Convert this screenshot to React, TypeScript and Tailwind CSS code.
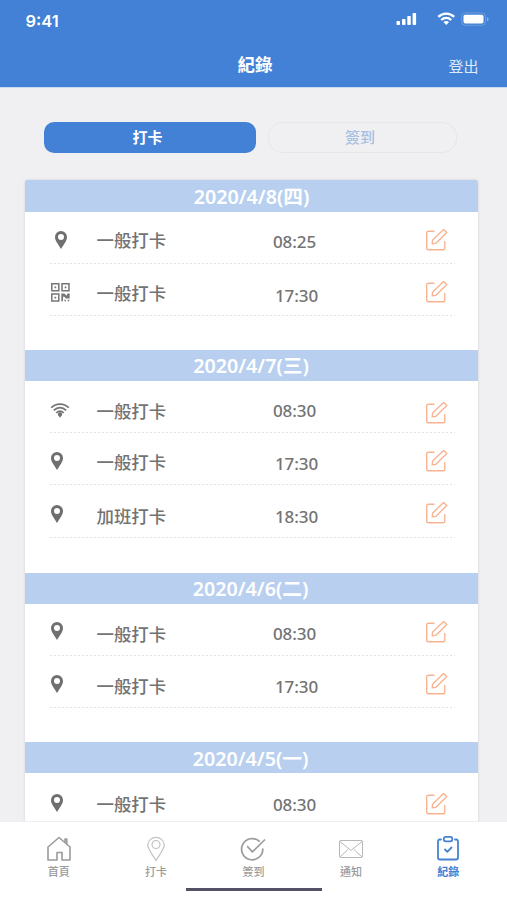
import React from "react";

type IconKind = "pin" | "pinLeft" | "qr" | "wifi";

interface Entry {
  icon: IconKind;
  iconTop: string;
  label: string;
  labelTop: string;
  time: string;
  timePos: string;
  editTop: string;
  height: string;
}

interface Day {
  date: string;
  title: string;
  height: string;
  entries: Entry[];
}

const days: Day[] = [
  {
    date: "2020/4/8(四)",
    title: "h-[32px] leading-[34px]",
    height: "h-[170px]",
    entries: [
      { icon: "pin", iconTop: "pt-[19px]", label: "一般打卡", labelTop: "pt-[18px]", time: "08:25", timePos: "pt-[20px]", editTop: "pt-[16px]", height: "h-[52px]" },
      { icon: "qr", iconTop: "pt-[19px]", label: "一般打卡", labelTop: "pt-[19px]", time: "17:30", timePos: "pt-[22px] pl-[2px]", editTop: "pt-[16px]", height: "h-[52px]" },
    ],
  },
  {
    date: "2020/4/7(三)",
    title: "h-[31px] leading-[32px] pr-[1px]",
    height: "h-[223px]",
    entries: [
      { icon: "wifi", iconTop: "pt-[19px]", label: "一般打卡", labelTop: "pt-[20px]", time: "08:30", timePos: "pt-[20px]", editTop: "pt-[20px]", height: "h-[52px]" },
      { icon: "pinLeft", iconTop: "pt-[19px]", label: "一般打卡", labelTop: "pt-[19px]", time: "17:30", timePos: "pt-[21px] pl-[2px]", editTop: "pt-[16px]", height: "h-[52px]" },
      { icon: "pinLeft", iconTop: "pt-[20px]", label: "加班打卡", labelTop: "pt-[21px]", time: "18:30", timePos: "pt-[22px] pl-[2px]", editTop: "pt-[16px]", height: "h-[53px]" },
    ],
  },
  {
    date: "2020/4/6(二)",
    title: "h-[31px] leading-[32px] pr-[2px]",
    height: "h-[169px]",
    entries: [
      { icon: "pinLeft", iconTop: "pt-[18px]", label: "一般打卡", labelTop: "pt-[20px]", time: "08:30", timePos: "pt-[20px]", editTop: "pt-[16px]", height: "h-[52px]" },
      { icon: "pinLeft", iconTop: "pt-[19px]", label: "一般打卡", labelTop: "pt-[20px]", time: "17:30", timePos: "pt-[21px] pl-[2px]", editTop: "pt-[16px]", height: "h-[52px]" },
    ],
  },
  {
    date: "2020/4/5(一)",
    title: "h-[31px] leading-[33px] pr-[2px]",
    height: "h-[170px]",
    entries: [
      { icon: "pinLeft", iconTop: "pt-[21px]", label: "一般打卡", labelTop: "pt-[21px]", time: "08:30", timePos: "pt-[22px]", editTop: "pt-[19px]", height: "h-[52px]" },
    ],
  },
];

function Pin() {
  return (
    <svg width="12" height="18" viewBox="0 0 12 18" fill="#6f6f6f">
      <path fillRule="evenodd" d="M6 0a6 6 0 0 1 6 6c0 2-.8 3.400-1.700 5.200L6 18 1.700 11.200C.8 9.400 0 8 0 6a6 6 0 0 1 6-6Zm0 3a3 3 0 1 0 0 6 3 3 0 0 0 0-6Z" />
    </svg>
  );
}

function Qr() {
  return (
    <svg width="19" height="19" viewBox="0 0 19 19" fill="none" stroke="#777" strokeWidth="1.500">
      <path d="M.8.8h7v7h-7zM11 .8h7v7h-7zM.8 11h7v7h-7z" />
      <path d="M3.500 3.500h1.700v1.700H3.500zM13.700 3.500h1.700v1.700h-1.700zM3.500 13.700h1.700v1.700H3.500z" fill="#777" stroke="none" />
      <path d="M10.300 10.500h3.200l2 2.200 1-2.200h2.200v5h-3.800l-1.600-1.800H12v4.500h-1.700zM13.500 16.800H15v1.500h-1.500zM16.700 16.800h1.600v1.500h-1.600z" fill="#777" stroke="none" />
    </svg>
  );
}

function SignalWaves() {
  return (
    <svg width="20" height="19" viewBox="0 0 20 19" fill="none" stroke="#757575" strokeWidth="1.600">
      <path d="M1.200 7.700C6 2.900 14 2.900 18.800 7.700M3.800 10.400c3.700-3.700 8.700-3.700 12.400 0M6.300 12.900c2.300-2.300 5.100-2.300 7.400 0" />
      <path d="M10 12.300a2.100 2.100 0 0 1 1.300 3.800L10 17.700 8.700 16.100A2.100 2.100 0 0 1 10 12.300Z" fill="#6f6f6f" stroke="none" />
    </svg>
  );
}

function EntryIcon({ kind }: { kind: IconKind }) {
  if (kind === "qr") return <div className="pl-[1px]"><Qr /></div>;
  if (kind === "wifi") return <SignalWaves />;
  return (
    <div className={kind === "pin" ? "pl-[5px]" : "pl-[1px]"}>
      <Pin />
    </div>
  );
}

function EditIcon() {
  return (
    <svg width="24" height="24" viewBox="0 0 24 24" fill="none" stroke="#f7b391" strokeWidth="1.350" strokeLinejoin="round" strokeLinecap="round">
      <path d="M9 3.200H3.200Q1.700 3.200 1.700 4.700V20.200q0 1.500 1.500 1.500H18.300q1.500 0 1.500-1.500V13.500" />
      <path d="M7.200 15.800 7.500 12.300 18.600 1.400 21.800 4.500 10.700 15.400Z" />
    </svg>
  );
}

function Row({ entry }: { entry: Entry }) {
  return (
    <div className={`ml-[25px] mr-[23px] flex flex-col text-[17.400px] font-medium text-[#737373] ${entry.height}`}>
      <div className="flex min-h-0 flex-1 items-start">
        <div className={`w-[46.500px] shrink-0 ${entry.iconTop}`}><EntryIcon kind={entry.icon} /></div>
        <div className={`w-[176.500px] shrink-0 leading-[20px] font-['Noto_Sans_CJK_TC',sans-serif] ${entry.labelTop}`}>{entry.label}</div>
        <div className={`w-[152px] shrink-0 text-[17px] leading-[20px] tracking-[-0.1px] ${entry.timePos}`}>{entry.time}</div>
        <div className={`shrink-0 ${entry.editTop}`}><EditIcon /></div>
      </div>
      <div className="h-px shrink-0 bg-[repeating-linear-gradient(90deg,#dfe3e3_0_2px,transparent_2px_4px)]" />
    </div>
  );
}

function StatusBar() {
  return (
    <div className="flex h-[42px] items-start justify-between pl-[25.500px] pr-[18px]">
      <span className="pt-[11px] font-['Inter',sans-serif] text-[16.500px] leading-[20px] font-semibold">9:41</span>
      <svg className="mt-[12px]" width="94" height="15" viewBox="0 0 94 15" fill="#fff">
        <rect x="1.500" y="9" width="3.500" height="4" rx=".8" />
        <rect x="7" y="7" width="3.500" height="6" rx=".8" />
        <rect x="12.300" y="4" width="3.500" height="9" rx=".8" />
        <rect x="17.600" y="1" width="3.500" height="12" rx=".8" />
        <g fill="none" stroke="#fff" strokeWidth="2.300">
          <path d="M43.300 4.900c4.500-4.400 11.400-4.400 15.900 0M46.200 8c3-2.700 7.100-2.700 10.100 0" />
        </g>
        <path d="M48.400 10.100c1.700-1.400 4-1.400 5.700 0L51.250 13Z" />
        <rect x="66.700" y=".9" width="23.600" height="12.400" rx="3.500" fill="none" stroke="#fff" strokeOpacity=".22" />
        <rect x="68.500" y="2.700" width="20" height="8.800" rx="1.800" />
        <path d="M92 5.200q1.500.5 1.500 2t-1.500 2Z" opacity=".4" />
      </svg>
    </div>
  );
}

function NavItem({ label, active, children }: { label: string; active?: boolean; children: React.ReactNode }) {
  return (
    <div className={`flex flex-col items-center ${active ? "font-bold text-[#4582d4]" : "font-medium text-[#9b9b9b]"}`}>
      <svg width="28" height="28" viewBox="0 0 28 28" fill="none" stroke="currentColor" strokeWidth="1.400" strokeLinejoin="round" strokeLinecap="round">
        {children}
      </svg>
      <span className="mt-[2px] text-[11px] leading-[14px] font-['Noto_Sans_CJK_TC',sans-serif]">{label}</span>
    </div>
  );
}

export default function App() {
  return (
    <div className="flex h-[900px] w-[507px] flex-col overflow-hidden bg-[#f0f0f2] font-['Noto_Sans','Noto_Sans_CJK_TC',sans-serif]">
      <header className="h-[87px] shrink-0 bg-[#4281d5] text-white">
        <StatusBar />
        <div className="grid grid-cols-3 font-['Noto_Sans_CJK_TC',sans-serif]">
          <span />
          <h1 className="pl-[3px] pt-[12px] text-center text-[17.500px] leading-[19px] font-bold">紀錄</h1>
          <span className="pr-[28.500px] pt-[14px] text-right text-[15px] leading-[20px] font-normal text-[#dfeafa]">登出</span>
        </div>
      </header>

      <main className="min-h-0 flex-1 overflow-hidden border-t border-[#c9dbf3]">
        <div className="flex gap-[12px] pl-[44px] pt-[34px] text-[15px] leading-[27px] font-['Noto_Sans_CJK_TC',sans-serif]">
          <button className="flex h-[31px] w-[212px] justify-center rounded-[10px] bg-[#4281d5] pr-[5px] pt-px font-bold text-white">打卡</button>
          <button className="flex h-[31px] w-[189px] justify-center rounded-[14px] border border-[#e6e7ea] pr-[5px] font-medium text-[#a5bfdf]">簽到</button>
        </div>
        <div className="mx-[25px] mt-[27px] w-[453px] overflow-hidden rounded-t-[2px] bg-white shadow-[0_0_3px_rgba(0,0,0,0.12)]">
          {days.map((day) => (
            <section key={day.date} className={day.height}>
              <h2 className={`bg-[#b8cff0] text-center text-[19.700px] font-semibold text-white ${day.title}`}>{day.date}</h2>
              {day.entries.map((entry, i) => <Row key={i} entry={entry} />)}
            </section>
          ))}
        </div>
      </main>

      <nav className="flex h-[79px] shrink-0 flex-col items-center border-t border-[#efeff1] bg-white">
        <div className="grid w-[487px] grid-cols-5 pt-[12px]">
          <NavItem label="首頁">
            <path d="M3 13 14 3.500 25 13V26H17V18.500H12V26H3ZM20 8.500V5h1.800v5" strokeWidth="1.600" />
          </NavItem>
          <NavItem label="打卡">
            <g stroke="#c2c2c2" strokeWidth="1.200">
              <path d="M14 26.500C11 21 5.700 15.500 5.700 10.500a8.400 8.400 0 0 1 16.600 0C22.300 15.500 17 21 14 26.500Z" />
              <circle cx="14" cy="10.500" r="4" />
            </g>
          </NavItem>
          <NavItem label="簽到">
            <path d="M20.200 7.200A10.600 10.600 0 1 0 23.800 15M8.700 12.700l4.700 5.200L25.500 6" strokeWidth="1.700" />
          </NavItem>
          <NavItem label="通知">
            <g stroke="#b7b7b7" strokeWidth="1">
              <rect x="2.500" y="6.500" width="23" height="17" rx="1.500" />
              <path d="m3 7.500 11 9 11-9M3.500 22.500l7.500-7M24.500 22.500l-7.500-7" />
            </g>
          </NavItem>
          <NavItem label="紀錄" active>
            <g strokeWidth="1.800">
              <path d="M7 5.500H5.700Q4 5.500 4 7.500V23.500q0 2 2 2H22q2 0 2-2V7.500Q24 5.500 22.300 5.500H21" />
              <rect x="9.800" y="2.800" width="8.500" height="4.500" rx="2" />
              <path d="m11 15.500 2.300 2.300 4.200-4.300" />
            </g>
          </NavItem>
        </div>
        <div className="mt-[10px] h-[3px] w-[136px] bg-[#555065]" />
      </nav>
    </div>
  );
}
